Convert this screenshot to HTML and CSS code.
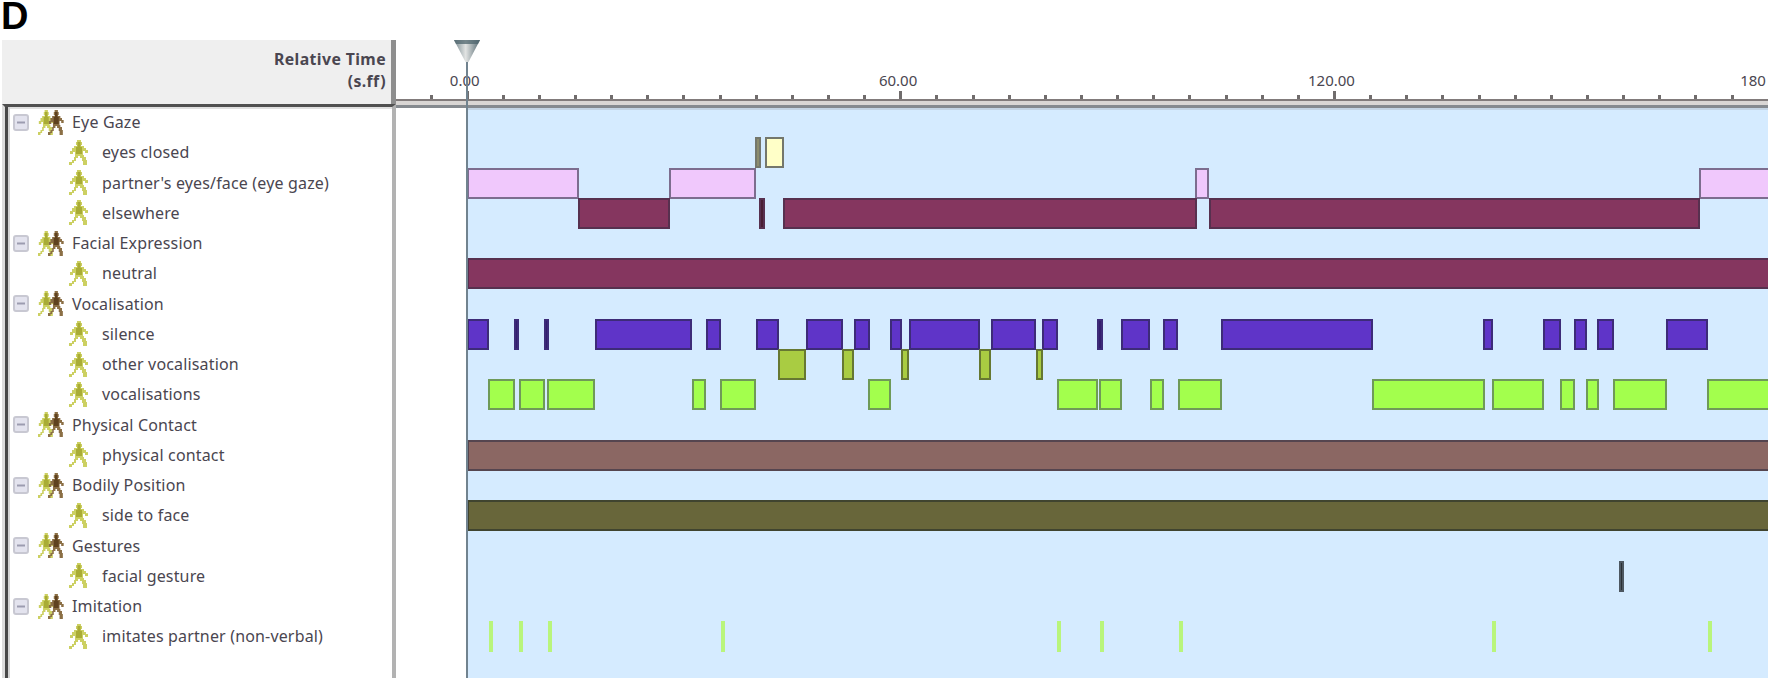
FILE: index.html
```html
<!DOCTYPE html>
<html lang="en">
<head>
  <meta charset="UTF-8">
  <title>Behaviour timeline</title>
  <link rel="stylesheet" href="styles.css">
</head>
<body>

  <svg class="defs" width="0" height="0">
    <symbol id="person" viewBox="0 0 20 25" preserveAspectRatio="none">
      <path d="M8 0h4v2h1v3h-1v1h3v2h2v2h2v3h-3v-2h-2v4h1v2h2v3h1v5h-4v-4h-1v-3h-2v-2H9v2H7v3H5v2H3v2H0v-3h3v-2h2v-3h1v-5H4v2H1v-3h2V8h2V6h3V5H7V2h1z" fill="currentColor"/>
      <path d="M8.500 2h3v5h1.500v7H7V7h1.500z"/>
    </symbol>
    <symbol id="toggle" viewBox="0 0 16 17">
      <rect x="1" y="1" width="14" height="15" rx="2" fill="#e3e3ee" stroke="#c8c8d2" stroke-width="2"/>
      <path d="M4 8.500h8" stroke="#9c9cb0" stroke-width="2"/>
    </symbol>
  </svg>

  <h1 class="figure-label">D</h1>

  <div class="observer">
    <aside class="sidebar">
      <div class="sidebar-head">
        <span class="head-time">Relative Time</span>
        <span class="head-unit">(s.ff)</span>
      </div>
      <div class="tree" id="tree"></div>
    </aside>

    <main class="timeline">
      <div class="ruler">
        <div class="labels">
          <span>0.00</span>
          <span>60.00</span>
          <span>120.00</span>
          <span>180</span>
        </div>
        <div class="ticks" id="ticks"></div>
      </div>
      <div class="plot" id="plot"></div>

      <div class="cursor">
        <svg width="28" height="24" viewBox="0 0 28 24">
          <defs>
            <linearGradient id="metal" x1="0" y1="0" x2="1" y2="0">
              <stop offset="0" stop-color="#7b8c92"/>
              <stop offset=".45" stop-color="#e2e4e3"/>
              <stop offset="1" stop-color="#566a72"/>
            </linearGradient>
          </defs>
          <path d="M1 0h26L15.500 22h-3z" fill="url(#metal)"/>
          <path d="M1 0h26l-2 4H3z" fill="#4f656e" opacity=".75"/>
        </svg>
      </div>
    </main>
  </div>

  <script src="script.js"></script>
</body>
</html>
```
FILE: styles.css
```css
body {
  margin: 0;
  width: 1772px;
  height: 682px;
  overflow: hidden;
  background: #fff;
  color: #4a4650;
  font-family: "Noto Sans", "Open Sans", sans-serif;
  font-size: 16px;
  letter-spacing: .16px;
}

.defs {
  display: block;
}

.figure-label {
  height: 40px;
  margin: 0;
  padding-left: 1px;
  box-sizing: border-box;
  font: bold 38px/33px "Liberation Sans", sans-serif;
  color: #000;
}

.observer {
  display: flex;
  width: 1768px;
  height: 638px;
}

/* left panel */
.sidebar {
  width: 396px;
  display: flex;
  flex-direction: column;
}

.sidebar-head {
  height: 64px;
  margin-left: 2px;
  padding: 8px 5px 0 0;
  box-sizing: border-box;
  display: flex;
  flex-direction: column;
  align-items: flex-end;
  background: #efefef;
  border-right: 5px solid #8e8e8e;
  font-size: 15.8px;
  font-weight: 700;
  line-height: 22px;
  letter-spacing: .4px;
}

.tree {
  flex: 1;
  margin-left: 2px;
  border-top: 3px solid #505050;
  border-left: 3px solid #dcdcdc;
  border-right: 4px solid #b2b2b2;
  box-shadow: inset 3px 0 #484848, inset 5px 0 #d4d4d4, inset 0 2px #e0e0e0;
}

.row {
  display: flex;
  align-items: center;
  height: 30.25px;
  white-space: nowrap;
}

.group {
  padding-left: 8px;
}

.group .people {
  display: flex;
  margin: 0 8px 0 9px;
}

.group .people svg + svg {
  margin-left: -7px;
}

.group .people svg {
  width: 16.5px;
}

.item {
  padding-left: 64px;
}

.item .icon {
  margin-right: 13px;
}

.icon {
  width: 20px;
  height: 25px;
  color: #ccd062;
  fill: #a9ac35;
}

.icon.dark {
  color: #8b6f45;
  fill: #5f421f;
}

.toggle {
  width: 16px;
  height: 17px;
}

/* right panel */
.timeline {
  position: relative;
  flex: 1;
  display: flex;
  flex-direction: column;
  overflow: hidden;
}

.ruler {
  height: 67.5px;
  box-sizing: border-box;
  display: flex;
  flex-direction: column;
  justify-content: flex-end;
  border-bottom: 3px solid #858a8f;
}

.labels {
  display: flex;
  margin-left: -148px;
  font-size: 15px;
  line-height: 22px;
  letter-spacing: 0;
}

.labels span {
  width: 433.4px;
  flex: none;
  text-align: center;
}

.labels span:last-child {
  width: auto;
  padding-left: 192px;
}

.ticks {
  display: flex;
  align-items: flex-end;
  gap: 33.15px;
  height: 8px;
  padding-left: 33.5px;
  border-bottom: 2px solid #817b7b;
  box-shadow: 0 4px #d9d6d4;
  margin-bottom: 4px;
}

.tick {
  flex: none;
  width: 3px;
  height: 4px;
  background: #706c6c;
}

.tick.major {
  height: 8px;
}

.plot {
  flex: 1;
  margin-left: 71px;
  background: #d5ebff;
  box-shadow: inset 0 2px #c3d4e4;
}

.track {
  display: flex;
  align-items: center;
  height: 30.25px;
}

.bar {
  flex: none;
  height: 31px;
  box-sizing: border-box;
  border: 2px solid #5d5868;
}

.bar.cream { background: #ffffc8; border-color: #74776c; }
.bar.pink { background: #f0c8fc; border-color: #7d6d8f; }
.bar.plum { background: #85365f; border-color: #57304f; }
.bar.violet { background: #5f34c8; border-color: #3d2b78; }
.bar.olive { background: #a9cc42; border-color: #667832; }
.bar.lime { background: #a3ff4d; border-color: #6f9a58; }
.bar.rose { background: #8b6763; border-color: #55454f; }
.bar.moss { background: #68663a; border-color: #40442f; }
.bar.slate { background: #4d5761; border-color: #4d5761; }
.bar.mark { background: #b9f57c; border: 0; }

/* very short events: the fill nearly disappears between the borders */
.bar.thin { background-image: linear-gradient(rgba(0, 0, 0, .45), rgba(0, 0, 0, .45)); }

.cursor {
  position: absolute;
  left: 57px;
  top: 0;
  bottom: 0;
  width: 28px;
  background: linear-gradient(#71838f, #71838f) 13px 0 / 2px 100% no-repeat;
}

.cursor svg {
  display: block;
}
```
FILE: script.js
```javascript
// bars are [start, end] pairs, in px from time zero
const rows = [
  { name: 'Eye Gaze', group: true },
  { name: 'eyes closed', color: 'cream', bars: [[288, 294], [297.5, 316.5]] },
  { name: "partner's eyes/face (eye gaze)", color: 'pink', bars: [[0, 112], [202, 288.7], [728.5, 742], [1232, 1304]] },
  { name: 'elsewhere', color: 'plum', bars: [[111, 202.5], [292, 298], [315.5, 730], [741.5, 1233]] },
  { name: 'Facial Expression', group: true },
  { name: 'neutral', color: 'plum', bars: [[0, 1304]] },
  { name: 'Vocalisation', group: true },
  { name: 'silence', color: 'violet', bars: [[0, 22], [46.5, 52], [76.5, 82], [127.5, 225], [238.5, 254], [288.5, 311.5], [338.5, 375.5], [386.5, 402.5], [423, 434.5], [441.5, 513], [523.5, 569], [574.5, 590.5], [630, 635.5], [653.5, 683], [696, 711], [753.5, 906], [1016, 1026], [1076, 1093.5], [1106.5, 1119.5], [1130, 1146.5], [1199, 1241]] },
  { name: 'other vocalisation', color: 'olive', bars: [[311, 339], [375, 387], [434, 442], [512, 524], [569, 576]] },
  { name: 'vocalisations', color: 'lime', bars: [[21, 48], [52, 78], [80, 128], [224.5, 239], [253, 289], [401, 423.5], [590, 631], [632, 655], [682.5, 697], [711, 754.5], [904.5, 1018], [1024.5, 1077], [1093, 1107.5], [1118.5, 1132], [1146, 1199.5], [1239.5, 1304]] },
  { name: 'Physical Contact', group: true },
  { name: 'physical contact', color: 'rose', bars: [[0, 1304]] },
  { name: 'Bodily Position', group: true },
  { name: 'side to face', color: 'moss', bars: [[0, 1304]] },
  { name: 'Gestures', group: true },
  { name: 'facial gesture', color: 'slate', bars: [[1151.5, 1156.5]] },
  { name: 'Imitation', group: true },
  { name: 'imitates partner (non-verbal)', color: 'mark', bars: [[22, 26], [52, 56], [81, 85], [254, 258], [590, 594], [633, 637], [712, 716], [1025, 1029], [1240.5, 1244.5]] }
];

const person = (cls = '') => `<svg class="icon ${cls}"><use href="#person"/></svg>`;

const tree = document.getElementById('tree');
const plot = document.getElementById('plot');

rows.forEach(row => {
  const el = document.createElement('div');
  if (row.group) {
    el.className = 'row group';
    el.innerHTML = `<svg class="toggle"><use href="#toggle"/></svg><span class="people">${person()}${person('dark')}</span><span>${row.name}</span>`;
  } else {
    el.className = 'row item';
    el.innerHTML = `${person()}<span>${row.name}</span>`;
  }
  tree.appendChild(el);

  const track = document.createElement('div');
  track.className = 'track';
  let last = 0;
  (row.bars || []).forEach(([start, end]) => {
    const bar = document.createElement('div');
    bar.className = 'bar ' + row.color;
    if (end - start <= 6 && row.color !== 'mark') bar.classList.add('thin');
    bar.style.marginLeft = (start - last) + 'px';
    bar.style.width = (end - start) + 'px';
    track.appendChild(bar);
    last = end;
  });
  plot.appendChild(track);
});

// one tick every 5 s, a taller one every 60 s
const ticks = document.getElementById('ticks');
for (let i = -1; i < 36; i++) {
  const tick = document.createElement('i');
  tick.className = i % 12 === 0 ? 'tick major' : 'tick';
  ticks.appendChild(tick);
}
```
